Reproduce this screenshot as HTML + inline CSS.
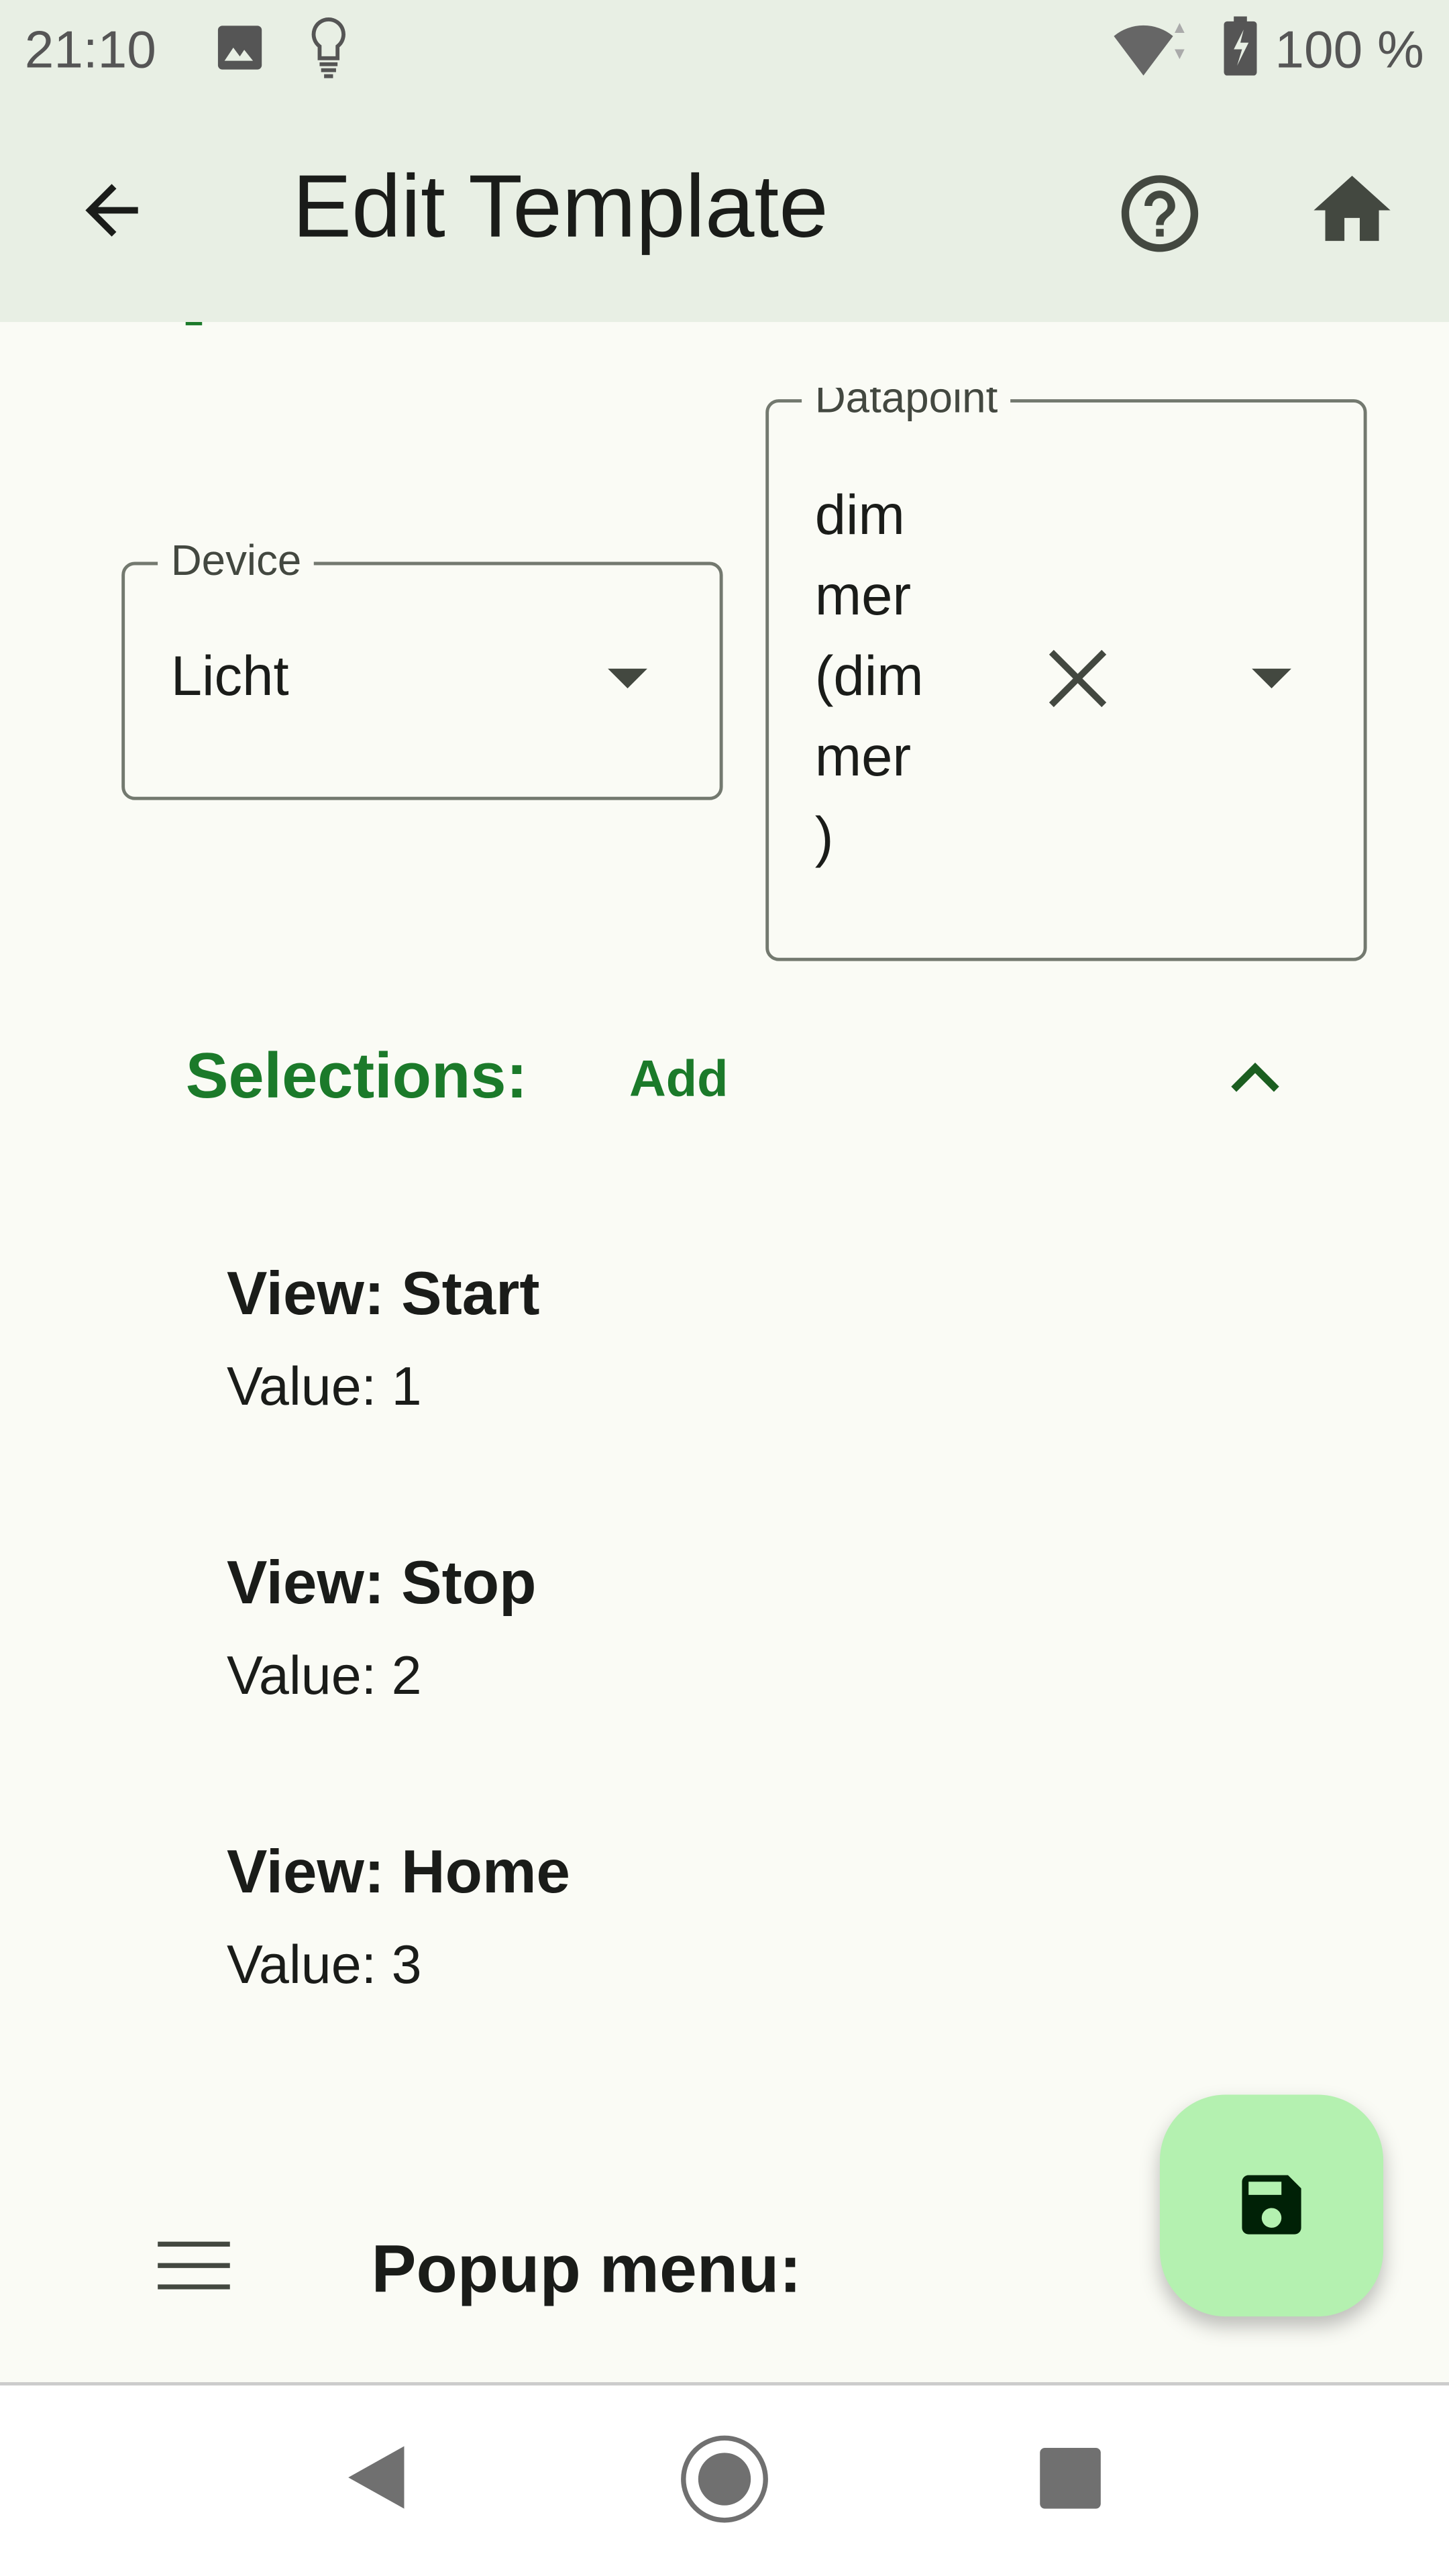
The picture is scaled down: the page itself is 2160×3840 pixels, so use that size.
<!DOCTYPE html>
<html><head><meta charset="utf-8"><style>
*{margin:0;padding:0;box-sizing:border-box}
html,body{width:2160px;height:3840px;overflow:hidden;background:#fafbf5}
#w{position:absolute;left:0;top:0;width:882px;height:1568px;transform:scale(2.449);transform-origin:0 0;font-family:"Liberation Sans",sans-serif;background:#fafbf5}
.a{position:absolute;white-space:nowrap}
.h{z-index:2}
</style></head><body><div id="w">
<div class="a" style="left:466px;top:243px;width:366px;height:342px;border:2px solid #73796f;border-radius:8px"></div>
<div class="a" style="left:488px;top:236px;padding:0 8px;height:22px;overflow:hidden;background:#fafbf5;font-size:26px;color:#434840"><div style="margin-top:-9px">Datapoint</div></div>
<div class="a" style="left:0;top:0;width:882px;height:196px;background:#e8efe4;z-index:1"></div>
<div class="a h" style="left:15px;top:12px;font-size:32px;color:#555">21:10</div>
<svg class="a h" style="left:130px;top:13px" width="32" height="32" viewBox="0 0 24 24"><rect x="2" y="2" width="20" height="20" rx="2" fill="#555"/><path d="M5 18l4-6 3 4 2-3 4 5z" fill="#e8efe4"/></svg>
<svg class="a h" style="left:186px;top:10px" width="28" height="40" viewBox="0 0 14 22"><path d="M7 1a5 5 0 0 0-3 9v4h6v-4a5 5 0 0 0-3-9zM4 16h6M4.5 18h5M5.5 20h3" fill="none" stroke="#555" stroke-width="1.3"/></svg>
<svg class="a h" style="left:674px;top:12px" width="50" height="36" viewBox="0 0 50 36"><path d="M4 10a28 28 0 0 1 36 0L22 34z" fill="#666"/><path d="M44 2l3 6h-6zM44 24l3-6h-6z" fill="#aaa"/></svg>
<svg class="a h" style="left:744px;top:10px" width="22" height="36" viewBox="0 0 22 36"><rect x="7" y="0" width="8" height="4" fill="#555"/><rect x="1" y="3" width="20" height="33" rx="2" fill="#555"/><path d="M13 8l-6 12h5l-3 10 7-14h-5z" fill="#e8efe4"/></svg>
<div class="a h" style="left:776px;top:12px;font-size:32px;color:#555">100 %</div>
<svg class="a h" style="left:44px;top:104px" width="48" height="48" viewBox="0 0 24 24"><path d="M20 11H7.830l5.59-5.59L12 4l-8 8 8 8 1.41-1.41L7.83 13H20z" fill="#1a1c19"/></svg>
<div class="a h" style="left:178px;top:95px;font-size:54px;color:#1a1c19">Edit Template</div>
<svg class="a h" style="left:678px;top:102px" width="56" height="56" viewBox="0 0 24 24"><path d="M11 18h2v-2h-2v2zm1-16C6.48 2 2 6.48 2 12s4.48 10 10 10 10-4.48 10-10S17.52 2 12 2zm0 18c-4.41 0-8-3.59-8-8s3.59-8 8-8 8 3.59 8 8-3.59 8-8 8zm0-14c-2.21 0-4 1.79-4 4h2c0-1.1.9-2 2-2s2 .9 2 2c0 2-3 1.75-3 5h2c0-2.25 3-2.5 3-5 0-2.21-1.79-4-4-4z" fill="#434840"/></svg>
<svg class="a h" style="left:795px;top:100px" width="56" height="56" viewBox="0 0 24 24"><path d="M10 20v-6h4v6h5v-8h3L12 3 2 12h3v8z" fill="#434840"/></svg>
<div class="a" style="left:113px;top:195px;width:10px;height:3px;background:#1b7a2a"></div>
<div class="a" style="left:74px;top:342px;width:366px;height:145px;border:2px solid #73796f;border-radius:8px"></div>
<div class="a" style="left:96px;top:326px;padding:0 8px;background:#fafbf5;font-size:26px;color:#434840">Device</div>
<div class="a" style="left:104px;top:393px;font-size:34px;color:#1a1c19">Licht</div>
<svg class="a" style="left:368px;top:406px" width="28" height="14" viewBox="0 0 28 14"><path d="M2 1h24L14 13z" fill="#434840"/></svg>
<div class="a" style="left:496px;top:290px;font-size:34px;line-height:49px;color:#1a1c19;white-space:normal">dim<br>mer<br>(dim<br>mer<br>)</div>
<svg class="a" style="left:636px;top:393px" width="40" height="40" viewBox="0 0 40 40"><path d="M4 4l32 32M36 4L4 36" stroke="#434840" stroke-width="4"/></svg>
<svg class="a" style="left:760px;top:406px" width="28" height="14" viewBox="0 0 28 14"><path d="M2 1h24L14 13z" fill="#434840"/></svg>
<div class="a" style="left:113px;top:634px;font-size:39px;font-weight:bold;color:#1b7a2a">Selections:</div>
<div class="a" style="left:383px;top:639px;font-size:31px;font-weight:bold;color:#1b7a2a">Add</div>
<svg class="a" style="left:748px;top:644px" width="32" height="22" viewBox="0 0 32 22"><path d="M3 19L16 6l13 13" fill="none" stroke="#1b5e20" stroke-width="4.5"/></svg>
<div class="a" style="left:138px;top:767px;font-size:37px;font-weight:bold;color:#1a1c19">View: Start</div>
<div class="a" style="left:138px;top:825px;font-size:33px;color:#1a1c19">Value: 1</div>
<div class="a" style="left:138px;top:943px;font-size:37px;font-weight:bold;color:#1a1c19">View: Stop</div>
<div class="a" style="left:138px;top:1001px;font-size:33px;color:#1a1c19">Value: 2</div>
<div class="a" style="left:138px;top:1119px;font-size:37px;font-weight:bold;color:#1a1c19">View: Home</div>
<div class="a" style="left:138px;top:1177px;font-size:33px;color:#1a1c19">Value: 3</div>
<svg class="a" style="left:96px;top:1364px" width="44" height="30" viewBox="0 0 44 30"><path d="M0 2h44M0 15h44M0 28h44" stroke="#434840" stroke-width="3"/></svg>
<div class="a" style="left:226px;top:1358px;font-size:41px;font-weight:bold;color:#1a1c19">Popup menu:</div>
<div class="a" style="left:706px;top:1275px;width:136px;height:135px;border-radius:40px;background:#b4f1b0;box-shadow:0 6px 12px rgba(0,0,0,.25)"></div>
<svg class="a" style="left:750px;top:1318px" width="48" height="48" viewBox="0 0 24 24"><path d="M17 3H5a2 2 0 0 0-2 2v14a2 2 0 0 0 2 2h14a2 2 0 0 0 2-2V7l-4-4zm-5 16c-1.66 0-3-1.34-3-3s1.34-3 3-3 3 1.34 3 3-1.34 3-3 3zm3-10H5V5h10v4z" fill="#002106"/></svg>
<div class="a" style="left:0;top:1450px;width:882px;height:118px;background:#fff;border-top:2px solid #ccc"></div>
<svg class="a" style="left:208px;top:1487px" width="40" height="42" viewBox="0 0 40 42"><path d="M38 2v38L4 21z" fill="#707070"/></svg>
<svg class="a" style="left:412px;top:1480px" width="58" height="58" viewBox="0 0 58 58"><circle cx="29" cy="29" r="25" fill="none" stroke="#707070" stroke-width="3"/><circle cx="29" cy="29" r="16" fill="#707070"/></svg>
<div class="a" style="left:633px;top:1490px;width:37px;height:37px;border-radius:3px;background:#707070"></div>
</div></body></html>
